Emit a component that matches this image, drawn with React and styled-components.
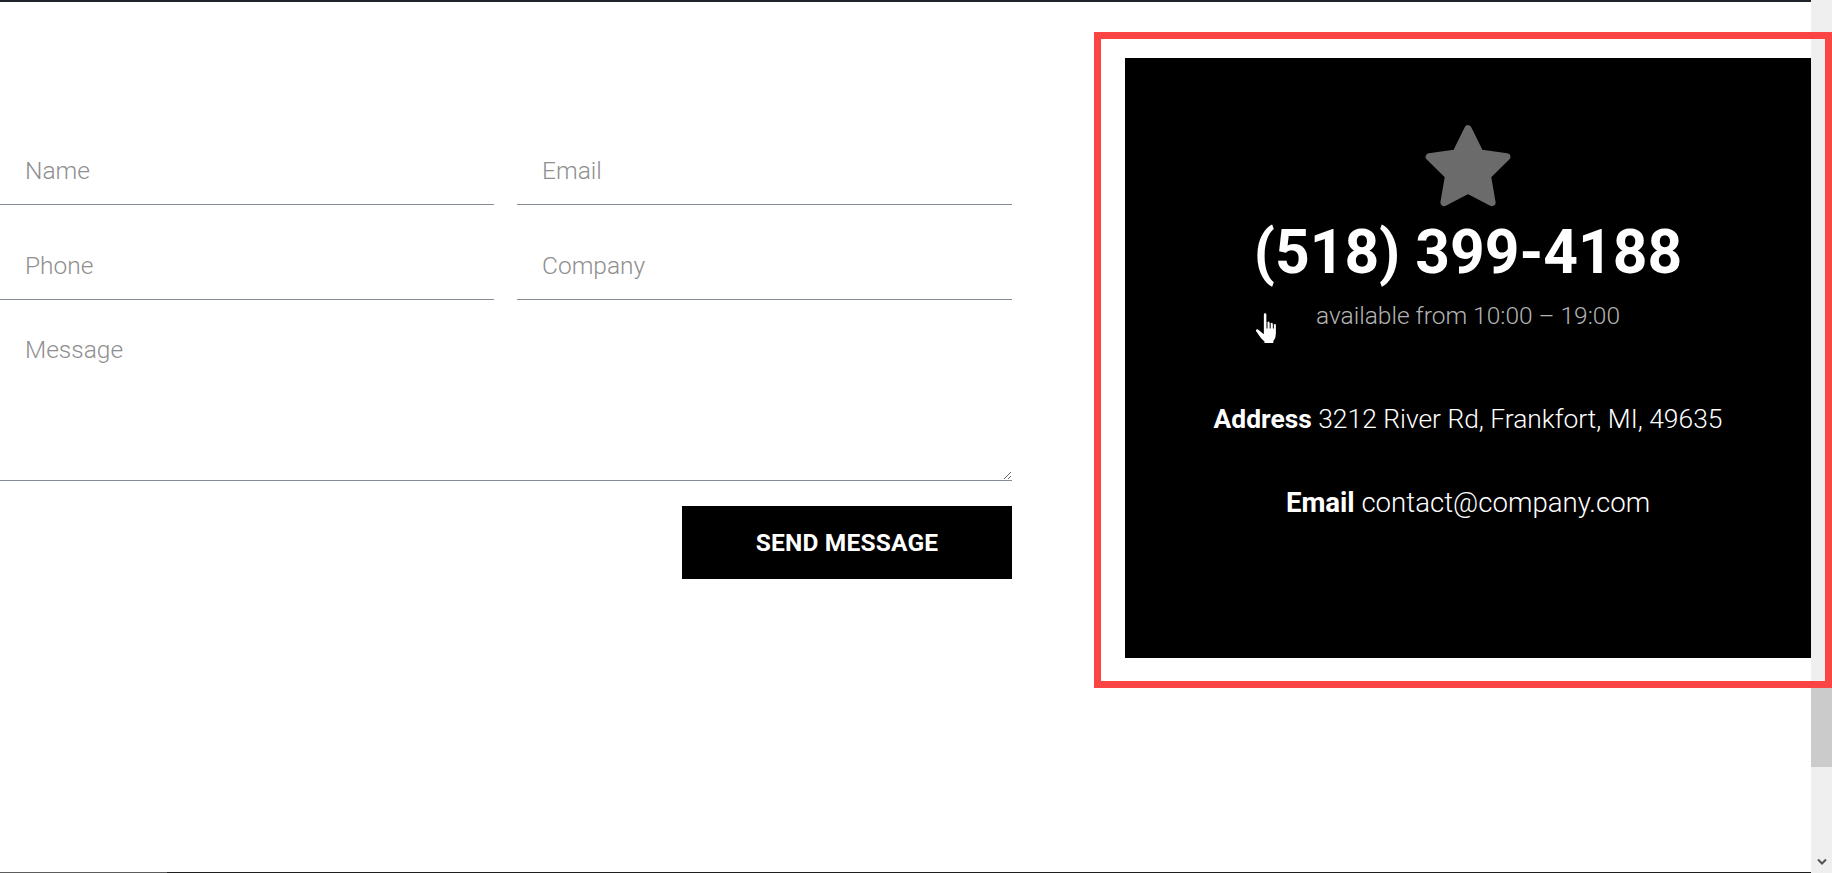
import React from "react";
import styled, { createGlobalStyle } from "styled-components";

const Global = createGlobalStyle`
  html, body { margin: 0; padding: 0; background: #fff; overflow: hidden; }
  body { font-family: Roboto, "Liberation Sans", Arial, sans-serif; }
  * { box-sizing: border-box; }
`;

const lightFont = `"Roboto Light", Roboto, "Liberation Sans", Arial, sans-serif`;

const Page = styled.div`
  position: relative;
  display: flex;
  width: 1832px;
  height: 873px;
  overflow: hidden;
`;

const Main = styled.div`
  flex: 1;
  display: flex;
  flex-direction: column;
  min-width: 0;
`;

const TopBar = styled.div`
  height: 2px;
  background: #1f2329;
  flex: none;
`;

const BottomLine = styled.div`
  height: 1px;
  flex: none;
  background: linear-gradient(to right, #5c5c5c 0, #5c5c5c 167px, #1e1e1e 167px);
`;

const Content = styled.div`
  flex: 1;
  display: flex;
  align-items: flex-start;
`;

const Form = styled.form`
  width: 1012px;
  flex: none;
  padding-top: 134px;
  display: flex;
  flex-direction: column;
`;

const FieldGrid = styled.div`
  display: grid;
  grid-template-columns: 494px 495px;
  column-gap: 23px;
  row-gap: 26px;
`;

const fieldText = `
  font-family: ${lightFont};
  font-weight: 300;
  font-size: 24.5px;
  color: #333;
  background: transparent;
  border: none;
  border-bottom: 1px solid #868c94;
  border-radius: 0;
  outline: none;
  padding: 0 25px;
  &::placeholder { color: #8f8f8f; opacity: 1; }
`;

const Input = styled.input`
  ${fieldText}
  width: 100%;
  height: 69px;
  line-height: 28px;
`;

const TextArea = styled.textarea`
  ${fieldText}
  display: block;
  margin-top: 26px;
  width: 100%;
  height: 155px;
  padding-top: 10px;
  line-height: 28px;
  resize: vertical;
`;

const Actions = styled.div`
  display: flex;
  justify-content: flex-end;
  margin-top: 25px;
`;

const SendButton = styled.button`
  width: 330px;
  height: 73px;
  border: none;
  border-radius: 0;
  background: #000;
  color: #fff;
  font-family: Roboto, "Liberation Sans", Arial, sans-serif;
  font-weight: 700;
  font-size: 24.5px;
  letter-spacing: 0.2px;
  text-transform: uppercase;
  cursor: pointer;
`;

const Panel = styled.section`
  flex: none;
  width: 686px;
  height: 600px;
  margin-left: 113px;
  margin-top: 56px;
  background: #000;
  display: flex;
  flex-direction: column;
  align-items: center;
  padding-top: 66px;
  text-align: center;
`;

const StarIcon = styled.svg`
  width: 88px;
  height: 83px;
  display: block;
`;

const PhoneNumber = styled.div`
  margin-top: 10px;
  font-weight: 700;
  font-size: 60.5px;
  line-height: 72px;
  color: #fff;
  white-space: nowrap;
`;

const Hours = styled.div`
  margin-top: 12px;
  font-family: ${lightFont};
  font-weight: 300;
  font-size: 24.5px;
  line-height: 30px;
  color: #b4b4b4;
`;

const InfoLine = styled.div`
  margin-top: ${(p) => p.$gap}px;
  font-family: ${lightFont};
  font-weight: 300;
  font-size: ${(p) => p.$size}px;
  line-height: 30px;
  color: #fff;
  white-space: nowrap;
`;

const Label = styled.strong`
  font-family: Roboto, "Liberation Sans", Arial, sans-serif;
  font-weight: 700;
`;

const Scrollbar = styled.div`
  position: relative;
  width: 21px;
  flex: none;
  height: 100%;
  background: #efefef;
`;

const Thumb = styled.div`
  position: absolute;
  left: 0;
  right: 0;
  top: 688px;
  height: 79px;
  background: #cbcbcb;
`;

const ArrowDown = styled.svg`
  position: absolute;
  left: 6px;
  bottom: 7px;
  width: 10px;
  height: 8px;
`;

const Highlight = styled.div`
  position: absolute;
  left: 1094px;
  top: 32px;
  width: 738px;
  height: 656px;
  border: 7px solid #fb4444;
  pointer-events: none;
`;

const Cursor = styled.svg`
  position: absolute;
  left: 1254px;
  top: 312px;
  width: 26px;
  height: 33px;
  pointer-events: none;
`;

export default function App() {
  return (
    <>
      <Global />
      <Page>
        <Main>
          <TopBar />
          <Content>
            <Form onSubmit={(e) => e.preventDefault()}>
              <FieldGrid>
                <Input placeholder="Name" />
                <Input placeholder="Email" />
                <Input placeholder="Phone" />
                <Input placeholder="Company" />
              </FieldGrid>
              <TextArea placeholder="Message" />
              <Actions>
                <SendButton type="submit">Send Message</SendButton>
              </Actions>
            </Form>
            <Panel>
              <StarIcon viewBox="-4 -3 108 102" aria-hidden="true">
                <polygon
                  points="50,3 64.69,32.77 97.55,37.55 73.78,60.73 79.39,93.45 50,78 20.61,93.45 26.22,60.73 2.45,37.55 35.31,32.77"
                  fill="#6b6b6b"
                  stroke="#6b6b6b"
                  strokeWidth="9"
                  strokeLinejoin="round"
                />
              </StarIcon>
              <PhoneNumber>(518) 399-4188</PhoneNumber>
              <Hours>available from 10:00 – 19:00</Hours>
              <InfoLine $gap={73} $size={26.4}>
                <Label>Address</Label> 3212 River Rd, Frankfort, MI, 49635
              </InfoLine>
              <InfoLine $gap={54} $size={27.6}>
                <Label>Email</Label> contact@company.com
              </InfoLine>
            </Panel>
          </Content>
          <BottomLine />
        </Main>
        <Scrollbar>
          <Thumb />
          <ArrowDown viewBox="0 0 10 8" aria-hidden="true">
            <path d="M1 1.5 L5 5.5 L9 1.5" fill="none" stroke="#555" strokeWidth="2" />
          </ArrowDown>
        </Scrollbar>
        <Highlight />
        <Cursor viewBox="0 0 20 26" aria-hidden="true">
          <path
            d="M7,2 Q7,0.5 8.5,0.5 Q10,0.5 10,2 L10,8 Q10,7 11.25,7 Q12.5,7 12.5,8.5 L12.5,9 Q12.5,8 13.75,8 Q15,8 15,9.5 L15,10 Q15,9 16.25,9 Q17.5,9 17.5,10.5 L17.5,17 Q17.5,21 15.5,23 L15.5,25 L7.5,25 L7.5,23.5 Q5,21.5 2.5,17.5 L1,15.5 Q0.3,14 1.5,13.3 Q2.8,12.8 4,14 L7,16.5 Z"
            fill="#fff"
            stroke="#000"
            strokeWidth="1"
          />
          <path d="M10 8 V13 M12.5 9 V13 M15 10 V13" stroke="#000" strokeWidth="0.8" fill="none" />
        </Cursor>
      </Page>
    </>
  );
}
